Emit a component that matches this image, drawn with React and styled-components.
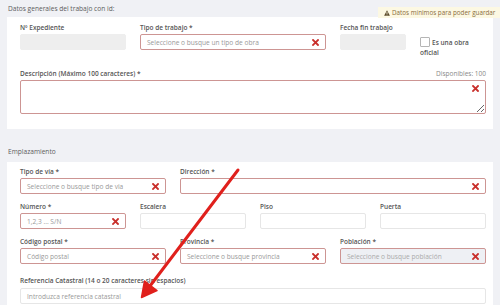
import React from "react";
import styled, { createGlobalStyle } from "styled-components";

const Global = createGlobalStyle`
  html, body { margin: 0; padding: 0; background: #f0f1f5; overflow: hidden; }
  body { font-family: "Open Sans", "Liberation Sans", sans-serif; color: #555; }
  * { box-sizing: border-box; }
`;

const Page = styled.div`
  position: relative;
  width: 500px;
  height: 305px;
  overflow: hidden;
`;

const Header = styled.div`
  display: flex;
  justify-content: space-between;
  align-items: center;
  height: 17px;
  padding-left: 8px;
`;

const Title = styled.div`
  font-size: 6.6px;
  line-height: 9px;
  color: #5c5c5c;
`;

const Badge = styled.div`
  align-self: flex-end;
  margin-bottom: -1px;
  height: 11px;
  width: 122px;
  background: #fcf8e3;
  color: #8a6d3b;
  font-size: 6.3px;
  line-height: 11px;
  padding-left: 6px;
  white-space: nowrap;
  display: flex;
  align-items: center;
  gap: 2px;
`;

const SectionTitle = styled.div`
  font-size: 6.6px;
  line-height: 9px;
  color: #5c5c5c;
  padding: 18px 0 6px 8px;
`;

const Card = styled.div`
  margin: 0 7px;
  background: #fff;
  padding: ${(p) => p.$pad};
`;

const Grid = styled.div`
  display: grid;
  grid-template-columns: repeat(12, 1fr);
  column-gap: 14px;
  row-gap: ${(p) => p.$rowGap}px;
`;

const Cell = styled.div`
  grid-column: span ${(p) => p.$span};
  padding-top: ${(p) => p.$pt || 0}px;
  margin-top: ${(p) => p.$mt || 0}px;
`;

const LabelRow = styled.div`
  display: flex;
  justify-content: space-between;
  margin-bottom: ${(p) => p.$mb ?? 2}px;
`;

const Label = styled.div`
  font-size: 6.5px;
  line-height: 9px;
  font-weight: 600;
  color: #555;
  white-space: nowrap;
`;

const Counter = styled.div`
  font-size: 6.5px;
  line-height: 9px;
  color: #888;
`;

const Box = styled.div`
  height: 16px;
  border-radius: 2px;
  border: 1px solid ${(p) => (p.$req ? "#cd9593" : p.$disabled ? "#eeeeee" : "#e6e6e6")};
  background: ${(p) => (p.$disabled ? "#eeeeee" : p.$muted ? "#eef0f4" : "#fff")};
  display: flex;
  align-items: center;
  justify-content: space-between;
  padding: 0 6px;
  font-size: 6.6px;
  color: ${(p) => (p.$muted ? "#aaa" : "#999")};
  white-space: nowrap;
  overflow: hidden;
`;

const TextAreaWrap = styled.div`
  position: relative;
  height: 34px;
`;

const TextArea = styled.textarea`
  display: block;
  width: 100%;
  height: 34px;
  margin: 0;
  border: 1px solid #cd9593;
  border-radius: 2px;
  resize: vertical;
  outline: none;
  font-family: inherit;
  font-size: 6.5px;
`;

const ClearIcon = styled.span`
  position: ${(p) => (p.$over ? "absolute" : "static")};
  top: 5px;
  right: 7px;
  display: inline-flex;
  flex: none;
`;

const CheckWrap = styled.div`
  font-size: 6.5px;
  line-height: 10px;
  font-weight: 600;
  color: #555;
`;

const CheckBox = styled.span`
  display: inline-block;
  width: 10px;
  height: 10px;
  border: 1px solid #b5b5b5;
  border-radius: 1px;
  background: #fff;
  vertical-align: middle;
  margin-right: 2px;
  position: relative;
  top: -1px;
`;

const ArrowSvg = styled.svg`
  position: absolute;
  left: 0;
  top: 0;
  pointer-events: none;
`;

const X = ({ over }) => (
  <ClearIcon $over={over}>
    <svg width="7" height="7" viewBox="0 0 7 7">
      <path d="M1 1 L6 6 M6 1 L1 6" stroke="#c9302c" strokeWidth="1.8" strokeLinecap="square" />
    </svg>
  </ClearIcon>
);

const Select = ({ text, muted }) => (
  <Box $req $muted={muted}>
    <span>{text}</span>
    <X />
  </Box>
);

const Warn = () => (
  <svg width="6" height="6" viewBox="0 0 12 12">
    <path d="M6 0.5 L11.8 11.3 H0.2 Z" fill="#5a4a2a" />
    <rect x="5.2" y="4" width="1.6" height="4" fill="#fcf8e3" />
    <rect x="5.2" y="9" width="1.6" height="1.5" fill="#fcf8e3" />
  </svg>
);

export default function App() {
  return (
    <Page>
      <Global />
      <Header>
        <Title>Datos generales del trabajo con id:</Title>
        <Badge>
          <Warn />
          Datos mínimos para poder guardar
        </Badge>
      </Header>
      <Card $pad="6px 7px 15px 13px">
        <Grid $rowGap={16}>
          <Cell $span={3}>
            <LabelRow><Label>Nº Expediente</Label></LabelRow>
            <Box $disabled />
          </Cell>
          <Cell $span={5}>
            <LabelRow><Label>Tipo de trabajo *</Label></LabelRow>
            <Select text="Seleccione o busque un tipo de obra" />
          </Cell>
          <Cell $span={2}>
            <LabelRow><Label>Fecha fin trabajo</Label></LabelRow>
            <Box $disabled />
          </Cell>
          <Cell $span={2} $pt={15}>
            <CheckWrap>
              <CheckBox />
              Es una obra oficial
            </CheckWrap>
          </Cell>
          <Cell $span={12} $mt={-5}>
            <LabelRow>
              <Label>Descripción (Máximo 100 caracteres) *</Label>
              <Counter>Disponibles: 100</Counter>
            </LabelRow>
            <TextAreaWrap>
              <TextArea readOnly />
              <X over />
            </TextAreaWrap>
          </Cell>
        </Grid>
      </Card>
      <SectionTitle>Emplazamiento</SectionTitle>
      <Card $pad="5px 7px 20px 13px">
        <Grid $rowGap={8}>
          <Cell $span={4}>
            <LabelRow><Label>Tipo de vía *</Label></LabelRow>
            <Select text="Seleccione o busque tipo de via" />
          </Cell>
          <Cell $span={8}>
            <LabelRow><Label>Dirección *</Label></LabelRow>
            <Select text="" />
          </Cell>
          <Cell $span={3}>
            <LabelRow><Label>Número *</Label></LabelRow>
            <Select text="1,2,3 ... S/N" />
          </Cell>
          <Cell $span={3}>
            <LabelRow><Label>Escalera</Label></LabelRow>
            <Box />
          </Cell>
          <Cell $span={3}>
            <LabelRow><Label>Piso</Label></LabelRow>
            <Box />
          </Cell>
          <Cell $span={3}>
            <LabelRow><Label>Puerta</Label></LabelRow>
            <Box />
          </Cell>
          <Cell $span={4}>
            <LabelRow><Label>Código postal *</Label></LabelRow>
            <Select text="Código postal" />
          </Cell>
          <Cell $span={4}>
            <LabelRow><Label>Provincia *</Label></LabelRow>
            <Select text="Seleccione o busque provincia" />
          </Cell>
          <Cell $span={4}>
            <LabelRow><Label>Población *</Label></LabelRow>
            <Select text="Seleccione o busque población" muted />
          </Cell>
          <Cell $span={12} $mt={4}>
            <LabelRow $mb={3}><Label>Referencia Catastral (14 o 20 caracteres sin espacios)</Label></LabelRow>
            <Box>Introduzca referencia catastral</Box>
          </Cell>
        </Grid>
      </Card>
      <ArrowSvg width="500" height="305" viewBox="0 0 500 305">
        <line x1="238" y1="170" x2="150" y2="286" stroke="#e0201c" strokeWidth="3" strokeLinecap="round" />
        <path d="M141.5 297.5 L144.5 281 L157 290.5 Z" fill="#e0201c" stroke="#e0201c" strokeWidth="1.5" strokeLinejoin="round" />
      </ArrowSvg>
    </Page>
  );
}
